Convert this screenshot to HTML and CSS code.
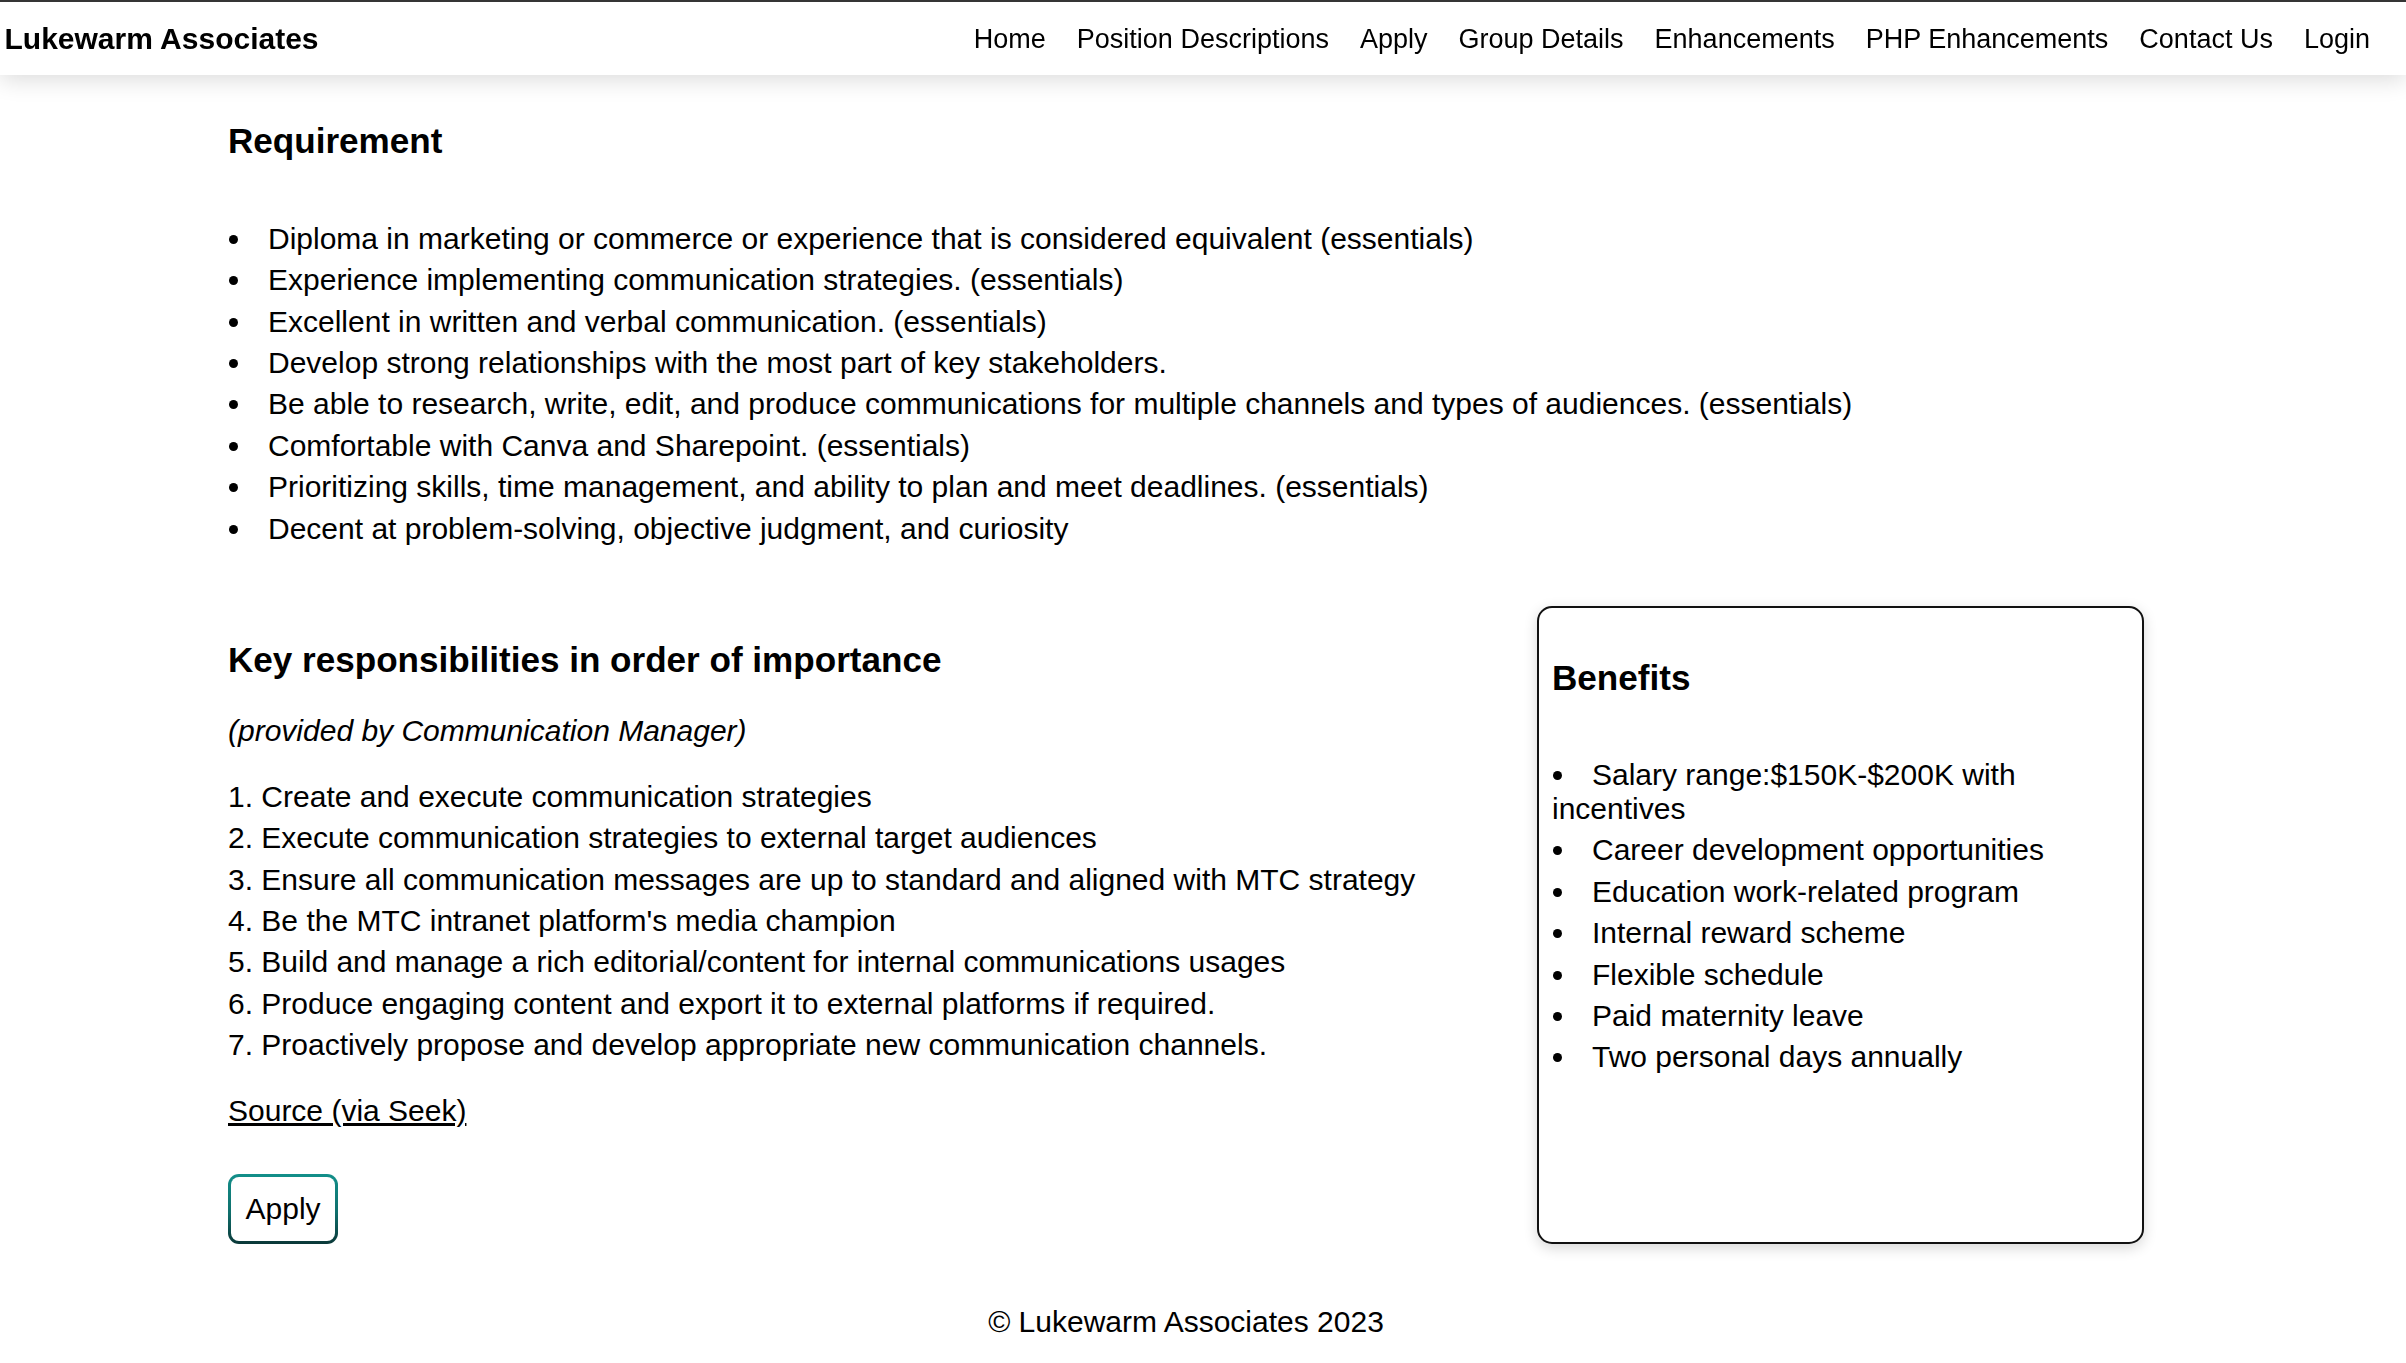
FILE: index.html
```html
<!DOCTYPE html>
<html lang="en">
<head>
<meta charset="utf-8">
<title>Lukewarm Associates - Position</title>
<link rel="stylesheet" href="styles.css">
</head>
<body>
<header class="navbar">
  <a class="brand" href="#">Lukewarm Associates</a>
  <nav class="nav-links">
    <a href="#">Home</a>
    <a href="#">Position Descriptions</a>
    <a href="#">Apply</a>
    <a href="#">Group Details</a>
    <a href="#">Enhancements</a>
    <a href="#">PHP Enhancements</a>
    <a href="#">Contact Us</a>
    <a href="#">Login</a>
  </nav>
</header>

<main class="page">
  <section class="requirements">
    <h3 class="section-title first">Requirement</h3>
    <ul class="dot-list req-list">
      <li>Diploma in marketing or commerce or experience that is considered equivalent (essentials)</li>
      <li>Experience implementing communication strategies. (essentials)</li>
      <li>Excellent in written and verbal communication. (essentials)</li>
      <li>Develop strong relationships with the most part of key stakeholders.</li>
      <li>Be able to research, write, edit, and produce communications for multiple channels and types of audiences. (essentials)</li>
      <li>Comfortable with Canva and Sharepoint. (essentials)</li>
      <li>Prioritizing skills, time management, and ability to plan and meet deadlines. (essentials)</li>
      <li>Decent at problem-solving, objective judgment, and curiosity</li>
    </ul>
  </section>

  <div class="row">
    <section class="responsibilities">
      <h3 class="section-title">Key responsibilities in order of importance</h3>
      <p class="note">(provided by Communication Manager)</p>
      <ol class="num-list">
        <li>Create and execute communication strategies</li>
        <li>Execute communication strategies to external target audiences</li>
        <li>Ensure all communication messages are up to standard and aligned with MTC strategy</li>
        <li>Be the MTC intranet platform's media champion</li>
        <li>Build and manage a rich editorial/content for internal communications usages</li>
        <li>Produce engaging content and export it to external platforms if required.</li>
        <li>Proactively propose and develop appropriate new communication channels.</li>
      </ol>
      <p class="source"><a href="#">Source (via Seek)</a></p>
      <button class="apply-btn" type="button">Apply</button>
    </section>

    <aside class="benefits">
      <h3 class="section-title">Benefits</h3>
      <ul class="dot-list ben-list">
        <li>Salary range:$150K-$200K with incentives</li>
        <li>Career development opportunities</li>
        <li>Education work-related program</li>
        <li>Internal reward scheme</li>
        <li>Flexible schedule</li>
        <li>Paid maternity leave</li>
        <li>Two personal days annually</li>
      </ul>
    </aside>
  </div>

  <footer class="footer">
    <p>&copy; Lukewarm Associates 2023</p>
  </footer>
</main>
</body>
</html>
```

FILE: styles.css
```css
body {
  margin: 0;
  font-family: "Liberation Sans", Arial, sans-serif;
  font-size: 30px;
  color: #000;
  background: #fff;
}

/* ---------- Navbar ---------- */
.navbar {
  position: fixed;
  top: 0;
  left: 0;
  right: 0;
  height: 73px;
  border-top: 2px solid #353535;
  background: #fff;
  display: flex;
  align-items: center;
  justify-content: space-between;
  padding: 0 20px 0 4.5px;
  box-shadow: 0 5px 22px rgba(0, 0, 0, 0.14);
  z-index: 10;
}

.brand {
  font-size: 30px;
  font-weight: bold;
  color: #000;
  text-decoration: none;
}

.nav-links {
  display: flex;
  align-items: center;
  padding-top: 2px;
}

.nav-links a {
  font-size: 27px;
  color: #000;
  text-decoration: none;
  padding: 0 15.5px;
}

.nav-links a:last-child {
  padding-right: 16px;
}

/* ---------- Page ---------- */
.page {
  width: 1916px;
  margin-left: 228px;
  padding-top: 121px;
}

.section-title {
  font-size: 35.1px;
  font-weight: bold;
  margin: 0;
}

/* bullet lists */
.dot-list {
  list-style: none;
  padding: 0;
  margin: 0;
}

.dot-list li {
  margin-bottom: 7.4px;
}

.dot-list li::before {
  content: "";
  display: inline-block;
  width: 9px;
  height: 9px;
  border-radius: 50%;
  background: #000;
  margin-left: 1px;
  margin-right: 30px;
  vertical-align: 5px;
}

.req-list {
  margin-top: 60.8px;
  margin-bottom: 60.7px;
}

/* two-column row */
.row {
  display: flex;
  align-items: stretch;
  justify-content: space-between;
  gap: 40px;
}

.responsibilities {
  flex: 1;
}

.responsibilities .section-title {
  margin-top: 34px;
  margin-bottom: 34px;
}

.note {
  font-style: italic;
  margin: 0 0 31.5px;
}

.num-list {
  list-style: decimal inside;
  padding: 0;
  margin: 31.5px 0 32px;
}

.num-list li {
  margin-bottom: 7.4px;
}

.source {
  margin: 32px 0 0;
}

.source a {
  color: #000;
  text-decoration: underline;
}

.apply-btn {
  display: block;
  margin: 46.2px 0 0;
  font-family: "Liberation Sans", Arial, sans-serif;
  font-size: 30px;
  line-height: normal;
  color: #000;
  padding: 15px 14.5px;
  border: 3px solid transparent;
  border-radius: 11px;
  background:
    linear-gradient(#fff, #fff) padding-box,
    linear-gradient(180deg, #128f8a 0%, #0f6f6c 55%, #0a3838 100%) border-box;
  cursor: pointer;
}

/* benefits card */
.benefits {
  width: 607px;
  box-sizing: border-box;
  border: 2px solid #111;
  border-radius: 15px;
  padding: 15px 13px;
  box-shadow: 0 4px 14px rgba(0, 0, 0, 0.16);
  background: #fff;
}

.benefits .section-title {
  margin-top: 35px;
}

.ben-list {
  margin-top: 59.8px;
}

/* footer */
.footer {
  text-align: center;
}

.footer p {
  margin: 60.5px 0 20px;
}
```
